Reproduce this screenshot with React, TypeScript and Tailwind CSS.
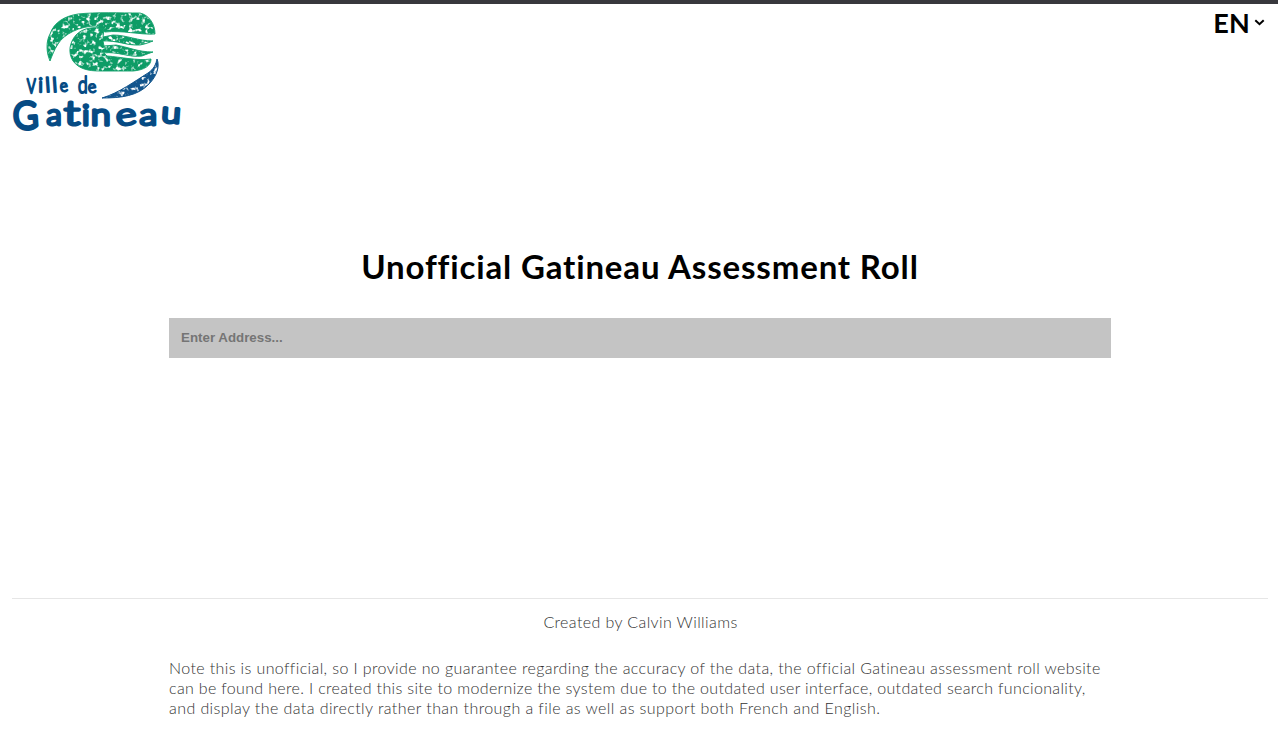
const INK = "#064b84";

type Glyph = { char: string; x: number; y: number; size: number; stretch: number; tilt: number; weight: number };

const glyphs: Glyph[] = [
  { char: "V", x: 27, y: 92.5, size: 20, stretch: 0.66, tilt: 0, weight: 2.5 },
  { char: "i", x: 38.5, y: 92, size: 19, stretch: 1, tilt: 0, weight: 2.3 },
  { char: "l", x: 46, y: 92, size: 20, stretch: 1, tilt: -4, weight: 2.3 },
  { char: "l", x: 53, y: 92, size: 20, stretch: 1, tilt: -4, weight: 2.3 },
  { char: "e", x: 60.5, y: 92, size: 17, stretch: 0.9, tilt: -8, weight: 1.9 },
  { char: "d", x: 78, y: 93, size: 23, stretch: 0.76, tilt: 0, weight: 2.1 },
  { char: "e", x: 88.5, y: 93, size: 17, stretch: 0.95, tilt: -8, weight: 1.9 },
  { char: "G", x: 14, y: 129.5, size: 37, stretch: 0.92, tilt: -4, weight: 4.2 },
  { char: "a", x: 46.5, y: 125, size: 29, stretch: 1.08, tilt: 0, weight: 3 },
  { char: "t", x: 64, y: 125, size: 34, stretch: 1.36, tilt: 0, weight: 3.1 },
  { char: "i", x: 82.5, y: 125, size: 27, stretch: 1.1, tilt: 0, weight: 3.7 },
  { char: "n", x: 91, y: 125, size: 30, stretch: 1.18, tilt: 0, weight: 3.4 },
  { char: "e", x: 117, y: 126, size: 30, stretch: 1.3, tilt: -7, weight: 3 },
  { char: "a", x: 139.5, y: 124.5, size: 29, stretch: 1.26, tilt: 0, weight: 3 },
  { char: "u", x: 161, y: 122, size: 29, stretch: 1.2, tilt: 4, weight: 3.4 },
];

const crescent =
  "M50 61C46 52 46 41 50 34C54 22 65 16 78 14C96 12 120 13 140 13C149 15 155 24 155 34C140 35 122 30 105 32L96 26C80 26 64 34 58 44C54 50 52 56 50 61Z";
const hand =
  "M104 29C95 26 82 28 76 35C69 43 68 53 73 61C79 69 88 71 100 71L133 71C144 70 151 66 151 59C137 61 121 57 107 56L104 53C117 51 130 58 142 56C147 54 150 53 153 52C138 52 128 47 116 45L104 46L103 41C116 40 128 46 140 45C146 44 150 42 153 41C138 41 127 35 113 35L103 37Z";
const swoosh =
  "M102 98C119 93 135 81 148 73C154 69 156 64 157 59C160 66 157 76 149 84C138 96 121 98 102 98Z";

function Logo() {
  return (
    <svg className="block h-[126px] w-[178px] overflow-visible" viewBox="12 10 178 126" role="img" aria-label="Ville de Gatineau">
      <defs>
        <filter id="crayon" x="-5%" y="-5%" width="110%" height="110%" colorInterpolationFilters="sRGB">
          <feTurbulence type="fractalNoise" baseFrequency="0.24" numOctaves="2" seed="8" result="noise" />
          <feColorMatrix
            in="noise"
            type="matrix"
            values="0 0 0 0 1  0 0 0 0 1  0 0 0 0 1  4.5 0 0 0 -2.3"
            result="specks"
          />
          <feComposite in="specks" in2="SourceAlpha" operator="in" result="inside" />
          <feMerge>
            <feMergeNode in="SourceGraphic" />
            <feMergeNode in="inside" />
          </feMerge>
        </filter>
      </defs>
      <g fill="#0d9c66" filter="url(#crayon)">
        <path d={crescent} />
        <path d={hand} />
      </g>
      <path d={swoosh} fill="#12558d" filter="url(#crayon)" />
      <g fill="none" strokeLinejoin="round">
        <path d={crescent} stroke="#12a06b" strokeWidth="0.9" />
        <path d={hand} stroke="#12a06b" strokeWidth="0.9" />
        <path d={swoosh} stroke="#12558d" strokeWidth="1" />
      </g>
      <g
        fill={INK}
        stroke={INK}
        strokeLinejoin="round"
        strokeLinecap="round"
        fontFamily="Lato, sans-serif"
        fontWeight="300"
      >
        {glyphs.map((g, i) => (
          <text
            key={i}
            fontSize={g.size}
            strokeWidth={g.weight}
            transform={`translate(${g.x} ${g.y}) rotate(${g.tilt}) scale(${g.stretch} 1)`}
          >
            {g.char}
          </text>
        ))}
      </g>
    </svg>
  );
}

export default function App() {
  return (
    <div className="flex h-[754px] flex-col overflow-hidden border-t-4 border-[#38383d] bg-white font-['Lato',sans-serif] text-black">
      <header className="flex h-[240px] items-start justify-between pt-1.5 pr-[13px] pl-3">
        <Logo />
        <button className="-mt-px flex h-[28px] items-center gap-[4px] text-[27px] font-bold">
          <span className="tracking-[0.2px]">EN</span>
          <svg className="-mt-[2px] h-[7px] w-[11px]" viewBox="0 0 11 7" fill="none" stroke="black" strokeWidth="2">
            <path d="M1.3 1.2L5.5 5.2L9.7 1.2" />
          </svg>
        </button>
      </header>
      <main className="flex h-[354px] flex-col items-center pl-[2px]">
        <h1 className="-mt-px h-[75px] text-[33px] leading-[46px] font-bold tracking-[0.84px] whitespace-nowrap">
          Unofficial Gatineau Assessment Roll
        </h1>
        <input
          className="h-10 w-[942px] bg-[#c4c4c4] px-3 pb-[2px] font-['Liberation_Sans',sans-serif] text-[13.333px] font-bold outline-none placeholder:text-[#757575]"
          placeholder="Enter Address..."
        />
      </main>
      <footer className="mr-[10px] ml-3 flex flex-col items-center border-t border-[#e6e6e6] text-[16px] leading-5 font-light text-[#333]">
        <p className="mt-[13px] pl-px tracking-[0.4px]">Created by Calvin Williams</p>
        <p className="mt-[26px] flex w-[942px] flex-col whitespace-nowrap">
          <span className="tracking-[0.387px]">
            Note this is unofficial, so I provide no guarantee regarding the accuracy of the data, the official Gatineau assessment roll website
          </span>
          <span className="tracking-[0.34px]">
            can be found here. I created this site to modernize the system due to the outdated user interface, outdated search funcionality,
          </span>
          <span className="tracking-[0.42px]">
            and display the data directly rather than through a file as well as support both French and English.
          </span>
        </p>
      </footer>
    </div>
  );
}
